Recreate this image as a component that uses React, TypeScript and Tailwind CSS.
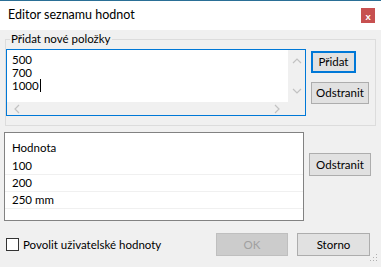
import React from "react";

const font = { fontFamily: 'Lato, "Noto Sans", "Liberation Sans", sans-serif' };

const Chevron: React.FC<{ dir: "up" | "down" | "left" | "right" }> = ({ dir }) => {
  const d = {
    up: "M1 6 L5 2 L9 6",
    down: "M1 2 L5 6 L9 2",
    left: "M6 1 L2 5 L6 9",
    right: "M2 1 L6 5 L2 9",
  }[dir];
  const vertical = dir === "up" || dir === "down";
  return (
    <svg width={vertical ? 10 : 8} height={vertical ? 8 : 10} viewBox={vertical ? "0 0 10 8" : "0 0 8 10"}>
      <path d={d} fill="none" stroke="#c2c2c2" strokeWidth="1.2" />
    </svg>
  );
};

const Button: React.FC<{ label: string; className?: string; focused?: boolean; disabled?: boolean }> = ({
  label,
  className = "",
  focused,
  disabled,
}) => (
  <div
    className={`flex items-center justify-center text-[11.5px] ${
      focused
        ? "border-2 border-[#0078d7] bg-[#e1e1e1] text-black"
        : disabled
        ? "border border-[#bfbfbf] bg-[#cccccc] text-[#a0a0a0]"
        : "border border-[#adadad] bg-[#e1e1e1] text-black"
    } ${className}`}
  >
    {label}
  </div>
);

export default function App() {
  const rows = ["100", "200", "250 mm"];

  return (
    <div className="w-[381px] h-[267px] flex flex-col bg-[#f0f0f0] overflow-hidden" style={font}>
      {/* title bar */}
      <div className="h-[30px] shrink-0 bg-white border-t border-[#2a6f96] flex items-center justify-between pl-[8px] pr-[6px]">
        <span className="text-[12.5px] text-black">Editor seznamu hodnot</span>
        <div className="w-[14px] h-[15px] bg-[#c75050] flex items-center justify-center text-white text-[10px] font-bold leading-none">
          x
        </div>
      </div>

      {/* body */}
      <div className="relative flex-1 flex flex-col">
        {/* group box */}
        <fieldset className="ml-[5px] mt-[2px] w-[371px] h-[94px] border border-[#dcdcdc] px-0">
          <legend className="ml-[4px] px-[1px] text-[11.5px] text-black leading-[14px]">Přidat nové položky</legend>
          <div className="flex mt-[3px]">
            {/* text box */}
            <div className="w-[300px] h-[67px] border border-[#0078d7] bg-white flex flex-col">
              <div className="flex flex-1">
                <div className="flex-1 pl-[5px] pt-[3px] text-[11.5px] leading-[13px] text-black">
                  <div className="h-[13px]">500</div>
                  <div className="h-[13px]">700</div>
                  <div className="h-[13px] flex items-center">
                    1000
                    <span className="inline-block w-px h-[13px] bg-black ml-px" />
                  </div>
                </div>
                <div className="w-[17px] bg-[#f0f0f0] flex flex-col items-center justify-between py-[7px]">
                  <Chevron dir="up" />
                  <Chevron dir="down" />
                </div>
              </div>
              <div className="h-[13px] bg-[#f0f0f0] flex items-center justify-between pl-[6px] pr-[24px]">
                <Chevron dir="left" />
                <Chevron dir="right" />
              </div>
            </div>
            <div className="ml-[5px] flex flex-col gap-[9px] pt-[2px]">
              <Button label="Přidat" focused className="w-[45px] h-[22px]" />
              <Button label="Odstranit" className="w-[58px] h-[22px]" />
            </div>
          </div>
        </fieldset>

        {/* list + remove */}
        <div className="flex mt-[6px]">
          <div className="ml-[4px] w-[300px] h-[89px] border border-[#828282] bg-white text-[11.5px] text-black">
            <div className="h-[25px] flex items-end pl-[7px] pb-[2px]">Hodnota</div>
            {rows.map((r) => (
              <div key={r} className="h-[17px] border-b border-[#f0f0f0] flex items-center pl-[7px]">
                {r}
              </div>
            ))}
          </div>
          <Button label="Odstranit" className="ml-[5px] mt-[21px] w-[62px] h-[23px]" />
        </div>

        {/* footer */}
        <div className="flex items-center mt-[12px]">
          <div className="ml-[6px] w-[13px] h-[13px] border border-[#333333] bg-white" />
          <span className="ml-[4px] text-[11.5px] text-black">Povolit uživatelské hodnoty</span>
          <Button label="OK" disabled className="ml-auto w-[72px] h-[23px]" />
          <Button label="Storno" className="ml-[9px] mr-[11px] w-[73px] h-[23px]" />
        </div>

        {/* resize grip */}
        <svg className="absolute right-[3px] bottom-[3px]" width="8" height="10" viewBox="0 0 8 10">
          <rect x="6" y="0" width="1" height="1" fill="#b0b0b0" />
          <rect x="6" y="3" width="1" height="1" fill="#b0b0b0" />
          <rect x="3" y="3" width="1" height="1" fill="#b0b0b0" />
          <rect x="6" y="6" width="1" height="1" fill="#b0b0b0" />
          <rect x="3" y="6" width="1" height="1" fill="#b0b0b0" />
          <rect x="0" y="6" width="1" height="1" fill="#b0b0b0" />
        </svg>
      </div>
    </div>
  );
}
